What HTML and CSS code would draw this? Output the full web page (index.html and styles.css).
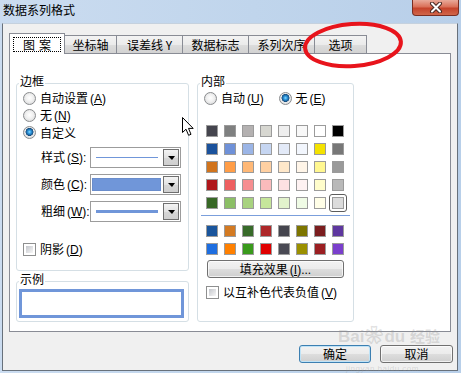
FILE: index.html
```html
<!DOCTYPE html>
<html lang="zh-CN">

<head>
    <meta charset="UTF-8">
    <title>数据系列格式</title>
    <link rel="stylesheet" href="styles.css">
</head>

<body>
    <div class="window">
        <div class="titlebar">
            <span class="title">数据系列格式</span>
            <span class="close">
                <svg width="14" height="11" viewBox="0 0 14 11">
                    <path d="M3 1.5 L11 9.5 M11 1.5 L3 9.5" stroke="#4a2a24" stroke-width="4" stroke-linecap="round" />
                    <path d="M3 1.5 L11 9.5 M11 1.5 L3 9.5" stroke="#fff" stroke-width="2" stroke-linecap="round" />
                </svg>
            </span>
        </div>

        <div class="client">
            <div class="tabs">
                <span class="tab tab-active"><span class="focus">图案</span></span>
                <span class="tab tab-s">坐标轴</span>
                <span class="tab tab-m">误差线 Y</span>
                <span class="tab tab-m">数据标志</span>
                <span class="tab tab-m">系列次序</span>
                <span class="tab tab-s">选项</span>
            </div>

            <div class="page">
                <div class="col">
                    <fieldset class="group border-group">
                        <legend>边框</legend>
                        <div class="options">
                            <div class="radio-row"><span class="radio"></span><span>自动设置<span class="key">(<u>A</u>)</span></span></div>
                            <div class="radio-row"><span class="radio"></span><span>无<span class="key">(<u>N</u>)</span></span></div>
                            <div class="radio-row"><span class="radio on"></span><span>自定义</span></div>
                        </div>
                        <div class="fields">
                            <div class="field">
                                <span class="field-label">样式<span class="key">(<u>S</u>):</span></span>
                                <span class="combo">
                                    <span class="combo-value"><span class="line-thin"></span></span>
                                    <span class="combo-btn"></span>
                                </span>
                            </div>
                            <div class="field">
                                <span class="field-label">颜色<span class="key">(<u>C</u>):</span></span>
                                <span class="combo">
                                    <span class="combo-value combo-fill"><span class="fill"></span></span>
                                    <span class="combo-btn"></span>
                                </span>
                            </div>
                            <div class="field">
                                <span class="field-label">粗细<span class="key">(<u>W</u>):</span></span>
                                <span class="combo">
                                    <span class="combo-value"><span class="line-thick"></span></span>
                                    <span class="combo-btn"></span>
                                </span>
                            </div>
                        </div>
                        <div class="check-row shadow-row"><span class="check"></span><span>阴影<span class="key">(<u>D</u>)</span></span></div>
                    </fieldset>

                    <fieldset class="group sample-group">
                        <legend>示例</legend>
                        <div class="sample"></div>
                    </fieldset>
                </div>

                <fieldset class="group fill-group">
                    <legend>内部</legend>
                    <div class="radio-pair">
                        <div class="radio-row"><span class="radio"></span><span>自动<span class="key">(<u>U</u>)</span></span></div>
                        <div class="radio-row"><span class="radio on"></span><span>无<span class="key">(<u>E</u>)</span></span></div>
                    </div>

                    <div class="palette">
                        <span class="cell"><span class="swatch" style="background:#45454e"></span></span>
                        <span class="cell"><span class="swatch" style="background:#7f8080"></span></span>
                        <span class="cell"><span class="swatch" style="background:#b4b1b1"></span></span>
                        <span class="cell"><span class="swatch" style="background:#d7d7d1"></span></span>
                        <span class="cell"><span class="swatch" style="background:#efefef"></span></span>
                        <span class="cell"><span class="swatch" style="background:#f8f8f8"></span></span>
                        <span class="cell"><span class="swatch" style="background:#ffffff"></span></span>
                        <span class="cell"><span class="swatch" style="background:#000000"></span></span>

                        <span class="cell"><span class="swatch" style="background:#1b529c"></span></span>
                        <span class="cell"><span class="swatch" style="background:#6f91d8"></span></span>
                        <span class="cell"><span class="swatch" style="background:#9bb5e6"></span></span>
                        <span class="cell"><span class="swatch" style="background:#c6d6f2"></span></span>
                        <span class="cell"><span class="swatch" style="background:#e3eaf8"></span></span>
                        <span class="cell"><span class="swatch" style="background:#f2f6fd"></span></span>
                        <span class="cell"><span class="swatch" style="background:#f4e200"></span></span>
                        <span class="cell"><span class="swatch" style="background:#777777"></span></span>

                        <span class="cell"><span class="swatch" style="background:#d1741d"></span></span>
                        <span class="cell"><span class="swatch" style="background:#ff9d47"></span></span>
                        <span class="cell"><span class="swatch" style="background:#ffb876"></span></span>
                        <span class="cell"><span class="swatch" style="background:#ffd0a2"></span></span>
                        <span class="cell"><span class="swatch" style="background:#ffe8ca"></span></span>
                        <span class="cell"><span class="swatch" style="background:#fff5e8"></span></span>
                        <span class="cell"><span class="swatch" style="background:#fff790"></span></span>
                        <span class="cell"><span class="swatch" style="background:#9a9a9a"></span></span>

                        <span class="cell"><span class="swatch" style="background:#b0171b"></span></span>
                        <span class="cell"><span class="swatch" style="background:#ee5f60"></span></span>
                        <span class="cell"><span class="swatch" style="background:#f68e90"></span></span>
                        <span class="cell"><span class="swatch" style="background:#fbbbbc"></span></span>
                        <span class="cell"><span class="swatch" style="background:#fde1e2"></span></span>
                        <span class="cell"><span class="swatch" style="background:#fef2f2"></span></span>
                        <span class="cell"><span class="swatch" style="background:#fffdcb"></span></span>
                        <span class="cell"><span class="swatch" style="background:#b9b9b9"></span></span>

                        <span class="cell"><span class="swatch" style="background:#386826"></span></span>
                        <span class="cell"><span class="swatch" style="background:#8cbf66"></span></span>
                        <span class="cell"><span class="swatch" style="background:#a8d27f"></span></span>
                        <span class="cell"><span class="swatch" style="background:#c6e69b"></span></span>
                        <span class="cell"><span class="swatch" style="background:#e2f2cc"></span></span>
                        <span class="cell"><span class="swatch" style="background:#effbe5"></span></span>
                        <span class="cell"><span class="swatch" style="background:#fffee7"></span></span>
                        <span class="cell selected"><span class="swatch" style="background:#dcdcdc"></span></span>
                    </div>

                    <div class="sep"></div>

                    <div class="palette palette-extra">
                        <span class="cell"><span class="swatch" style="background:#1a559c"></span></span>
                        <span class="cell"><span class="swatch" style="background:#d37a22"></span></span>
                        <span class="cell"><span class="swatch" style="background:#386b2a"></span></span>
                        <span class="cell"><span class="swatch" style="background:#ad2729"></span></span>
                        <span class="cell"><span class="swatch" style="background:#45454e"></span></span>
                        <span class="cell"><span class="swatch" style="background:#7d7500"></span></span>
                        <span class="cell"><span class="swatch" style="background:#7b1d1f"></span></span>
                        <span class="cell"><span class="swatch" style="background:#5e379f"></span></span>

                        <span class="cell"><span class="swatch" style="background:#1e6ee0"></span></span>
                        <span class="cell"><span class="swatch" style="background:#ff8000"></span></span>
                        <span class="cell"><span class="swatch" style="background:#3a9a1c"></span></span>
                        <span class="cell"><span class="swatch" style="background:#e00000"></span></span>
                        <span class="cell"><span class="swatch" style="background:#4a4a54"></span></span>
                        <span class="cell"><span class="swatch" style="background:#9b9000"></span></span>
                        <span class="cell"><span class="swatch" style="background:#9b1f22"></span></span>
                        <span class="cell"><span class="swatch" style="background:#7a3fcc"></span></span>
                    </div>

                    <button class="btn fill-btn">填充效果<span class="key">(<u>I</u>)...</span></button>
                    <div class="check-row invert-row"><span class="check"></span><span>以互补色代表负值<span class="key">(<u>V</u>)</span></span></div>
                </fieldset>
            </div>

            <div class="footer">
                <button class="btn btn-ok">确定</button>
                <button class="btn btn-cancel">取消</button>
            </div>
        </div>

        <!-- red hand-drawn mark around the 选项 tab -->
        <svg class="annotation" width="461" height="373" viewBox="0 0 461 373">
            <ellipse cx="353" cy="45" rx="48" ry="21" transform="rotate(-4 353 45)" fill="none" stroke="#e8141c" stroke-width="4" />
        </svg>

        <svg class="cursor" width="13" height="20" viewBox="0 0 13 20">
            <path d="M0.5 0.5 L0.5 15.5 L4 12.2 L6.6 18.3 L9 17.3 L6.5 11.4 L11.2 11.4 Z" fill="#fff" stroke="#000" stroke-width="1" stroke-linejoin="round" />
        </svg>

        <div class="watermark">
            <div class="wm-brand">Bai<span class="wm-paw">❀</span>du <span class="wm-cn">经验</span></div>
            <div class="wm-url">jingyan.baidu.com</div>
        </div>
    </div>
</body>

</html>
```

FILE: styles.css
```css
* {
    box-sizing: border-box;
}

body {
    margin: 0;
    font-family: "Noto Sans CJK SC", "Liberation Sans", sans-serif;
    font-size: 12px;
    line-height: 17px;
    color: #000;
    background: #c4d8ee;
}

u {
    text-decoration: underline;
}

/* mnemonic "(X)" after a label */
.key {
    font-family: "Liberation Sans", sans-serif;
    margin-left: 2px;
    white-space: nowrap;
}

.window {
    position: relative;
    width: 461px;
    height: 373px;
    overflow: hidden;
    display: flex;
    flex-direction: column;
    background: linear-gradient(90deg, #cbdcf0 0%, #c0d5ec 55%, #b8cfe9 100%);
}

/* title bar */
.titlebar {
    height: 23px;
    flex: none;
    display: flex;
    align-items: flex-start;
}

.title {
    padding: 3px 0 0 3px;
    line-height: 14px;
}

.close {
    margin-left: auto;
    margin-right: 2px;
    width: 47px;
    height: 16px;
    border: 1px solid #7a2e22;
    border-top: none;
    border-radius: 0 0 4px 4px;
    background: linear-gradient(#e9aa9a 0%, #da7059 45%, #c5432b 55%, #d0664a 100%);
    display: flex;
    align-items: center;
    justify-content: center;
}

/* dialog client area */
.client {
    flex: 1;
    margin: 0 3px 2px 2px;
    border: 1px solid #68717b;
    border-top-color: #c5d1de;
    background: #f0f0f0;
    padding: 9px 0 0 6px;
    display: flex;
    flex-direction: column;
}

.tabs {
    display: flex;
    align-items: flex-end;
    height: 21px;
    margin-bottom: -1px;
    position: relative;
    z-index: 1;
}

.tab {
    height: 18px;
    margin-bottom: 1px;
    margin-left: -1px;
    border: 1px solid #898c95;
    border-bottom: none;
    background: linear-gradient(#f3f3f3 0%, #ebebeb 50%, #dddddd 51%, #d2d2d2 100%);
    display: flex;
    align-items: center;
    justify-content: center;
    line-height: 14px;
}

.tab-active {
    width: 56px;
    height: 21px;
    margin: 0;
    background: #fff;
    position: relative;
    z-index: 1;
    align-items: flex-start;
    padding-top: 3px;
}

.tab-s {
    width: 53px;
}

.tab-m {
    width: 67px;
}

.focus {
    width: 48px;
    height: 15px;
    border: 1px dotted #000;
    text-align: center;
    letter-spacing: 4px;
    padding-left: 4px;
    line-height: 13px;
}

.page {
    width: 442px;
    height: 279px;
    border: 1px solid #898c95;
    background: #fff;
    padding: 21px 0 0 6px;
    display: flex;
    align-items: flex-start;
    gap: 8px;
}

.col {
    width: 173px;
    display: flex;
    flex-direction: column;
    gap: 2px;
}

.group {
    margin: 0;
    padding: 0;
    min-width: 0;
    border: 1px solid #d5dfe5;
    border-radius: 3px;
}

.group legend {
    margin-left: 2px;
    padding: 0 1px 4px;
    line-height: 12px;
}

.border-group {
    height: 196px;
}

.sample-group {
    height: 49px;
}

.fill-group {
    width: 157px;
    height: 247px;
}

/* radios and checkboxes */
.options {
    margin-top: -1px;
    padding-left: 6px;
}

.radio-row,
.check-row {
    display: flex;
    align-items: center;
    gap: 4px;
    height: 17px;
    white-space: nowrap;
}

.radio {
    width: 13px;
    height: 13px;
    flex: none;
    border: 1px solid #8a8c8e;
    border-radius: 50%;
    background: radial-gradient(circle at 50% 45%, #ffffff 0, #f0f0f0 45%, #cfd0d2 100%);
}

.radio.on {
    background:
        radial-gradient(circle at 50% 45%, #8fdcff 0, #2f9be2 1.6px, #1c5f98 3.2px, #174a78 3.8px, transparent 4.2px),
        radial-gradient(circle at 50% 45%, #ffffff 0, #f0f0f0 45%, #cfd0d2 100%);
}

.check {
    width: 13px;
    height: 13px;
    flex: none;
    border: 1px solid #8e8f8f;
    padding: 2px;
    background: linear-gradient(135deg, #c3c6cb, #f7f7f7) content-box, #fff;
}

.shadow-row {
    margin-top: 19px;
    padding-left: 6px;
}

/* combo boxes */
.fields {
    margin-top: 6px;
    padding-left: 24px;
    display: flex;
    flex-direction: column;
    gap: 6px;
}

.field {
    display: flex;
    align-items: center;
    height: 21px;
}

.field-label {
    width: 49px;
    flex: none;
    white-space: nowrap;
}

.combo {
    width: 91px;
    height: 21px;
    border: 1px solid #9c9c9c;
    background: #fff;
    padding: 1px;
    display: flex;
}

.combo-value {
    flex: 1;
    display: flex;
    align-items: center;
    padding: 0 5px 0 4px;
}

.combo-fill {
    padding: 2px 2px 2px 0;
    align-items: stretch;
}

.line-thin {
    flex: 1;
    height: 1px;
    background: #7096d9;
}

.line-thick {
    flex: 1;
    height: 3px;
    background: #7096d9;
}

.fill {
    flex: 1;
    background: #7096d9;
    border: 1px solid #6a8dcc;
}

.combo-btn {
    width: 16px;
    border: 1px solid #6f6f6f;
    background: linear-gradient(#f4f4f4, #e2e2e2 50%, #d6d6d6 51%, #cfcfcf);
    display: flex;
    align-items: center;
    justify-content: center;
}

.combo-btn::after {
    content: "";
    border-top: 4px solid #000;
    border-left: 4px solid transparent;
    border-right: 3px solid transparent;
}

.sample {
    width: 165px;
    height: 29px;
    margin-left: 2px;
    border: 3px solid #7096d9;
    background: #fff;
}

/* fill group */
.radio-pair {
    display: flex;
    margin-top: -1px;
    padding-left: 6px;
}

.radio-pair .radio-row {
    width: 81px;
}

.palette {
    display: grid;
    grid-template-columns: repeat(8, 18px);
    grid-auto-rows: 18px;
    margin: 15px 0 0 5px;
}

.palette-extra {
    margin-top: 6px;
}

.cell {
    display: flex;
    align-items: center;
    justify-content: center;
    border-radius: 3px;
}

.cell.selected {
    border: 1px solid #5c5c5c;
    box-shadow: inset 0 0 0 1px #fff;
}

.swatch {
    width: 12px;
    height: 12px;
    border: 1px solid #9b9b9b;
}

.sep {
    height: 1px;
    margin: 3px 3px 0;
    background: #7b9fdc;
}

.invert-row {
    margin-top: 6px;
    padding-left: 8px;
}

/* buttons */
.btn {
    height: 18px;
    padding: 0;
    font: inherit;
    line-height: 14px;
    color: #000;
    border: 1px solid #707070;
    border-radius: 3px;
    background: linear-gradient(#f2f2f2 0%, #ebebeb 50%, #dddddd 51%, #cfcfcf 100%);
    box-shadow: inset 0 0 0 1px rgba(255, 255, 255, 0.7);
}

.fill-btn {
    display: block;
    width: 137px;
    margin: 2px 0 0 9px;
}

.footer {
    display: flex;
    justify-content: flex-end;
    gap: 9px;
    margin-top: 13px;
    padding-right: 4px;
}

.btn-ok {
    width: 72px;
    border-color: #3c7fb1;
    box-shadow: inset 0 0 0 1px #bfe3f7;
}

.btn-cancel {
    width: 73px;
}

/* overlays */
.annotation {
    position: absolute;
    left: 0;
    top: 0;
    pointer-events: none;
    z-index: 5;
}

.cursor {
    position: absolute;
    left: 182px;
    top: 117px;
    z-index: 6;
}

.watermark {
    position: absolute;
    left: 338px;
    top: 325px;
    z-index: 4;
    color: rgba(150, 150, 150, 0.3);
    font-family: "Liberation Sans", sans-serif;
    pointer-events: none;
}

.wm-brand {
    font-size: 17px;
    font-weight: bold;
    line-height: 22px;
}

.wm-paw {
    font-size: 18px;
    margin: 0 1px;
}

.wm-cn {
    font-family: "Noto Sans CJK SC", sans-serif;
    font-size: 15px;
}

.wm-url {
    font-size: 8px;
    line-height: 8px;
    margin: 17px 0 0 8px;
    letter-spacing: 0.5px;
}
```
